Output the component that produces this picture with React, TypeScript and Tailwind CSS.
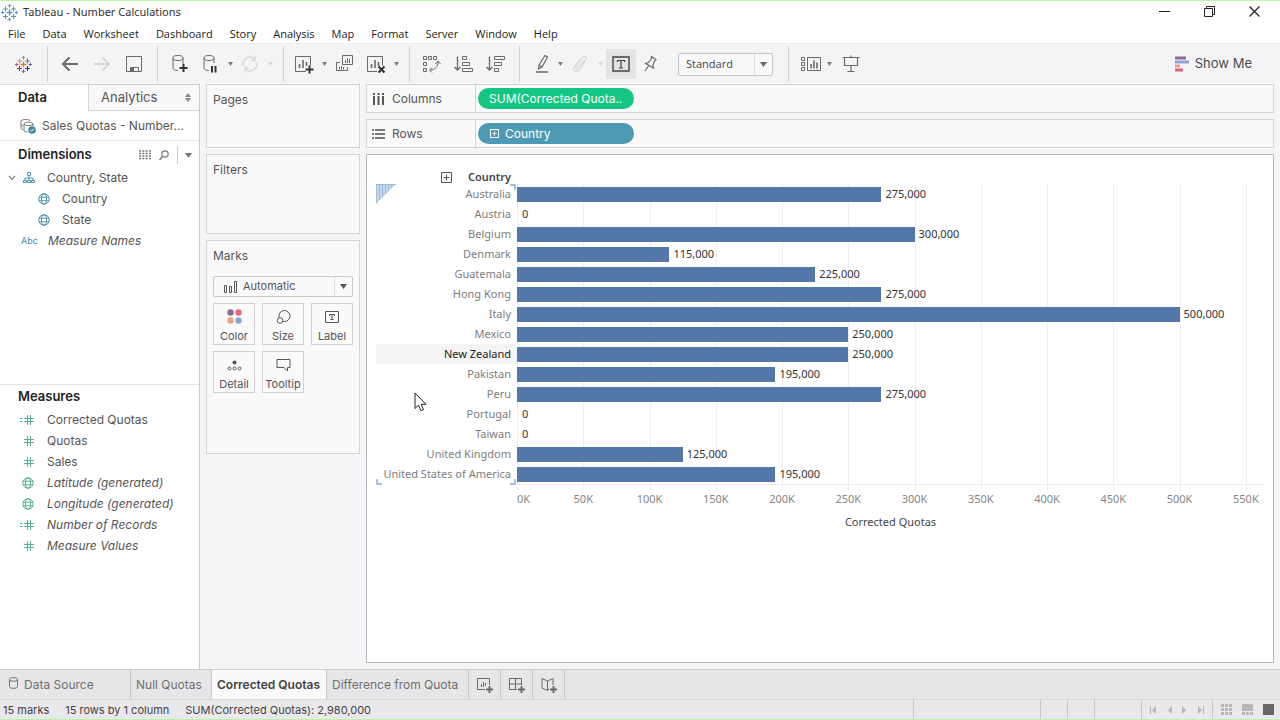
import { useState } from 'react';
import type { ReactNode } from 'react';

const menus = ['File', 'Data', 'Worksheet', 'Dashboard', 'Story', 'Analysis', 'Map', 'Format', 'Server', 'Window', 'Help'];

const quotas = [
    { country: 'Australia', value: 275000 },
    { country: 'Austria', value: 0 },
    { country: 'Belgium', value: 300000 },
    { country: 'Denmark', value: 115000 },
    { country: 'Guatemala', value: 225000 },
    { country: 'Hong Kong', value: 275000 },
    { country: 'Italy', value: 500000 },
    { country: 'Mexico', value: 250000 },
    { country: 'New Zealand', value: 250000 },
    { country: 'Pakistan', value: 195000 },
    { country: 'Peru', value: 275000 },
    { country: 'Portugal', value: 0 },
    { country: 'Taiwan', value: 0 },
    { country: 'United Kingdom', value: 125000 },
    { country: 'United States of America', value: 195000 },
];

const ticks = [0, 50, 100, 150, 200, 250, 300, 350, 400, 450, 500, 550];

// right edge of the axis
const AXIS_MAX = 563700;

const pct = (value: number) => `${(value / AXIS_MAX) * 100}%`;

type IconProps = { w?: number; h?: number; className?: string; children: ReactNode };

function Icon({ w = 20, h = 20, className = '', children }: IconProps) {
    return (
        <svg width={w} height={h} viewBox={`0 0 ${w} ${h}`} fill="none" stroke="currentColor" className={`shrink-0 ${className}`} aria-hidden="true">
            {children}
        </svg>
    );
}

function TableauLogo({ mono = false }: { mono?: boolean }) {
    const c = (color: string) => (mono ? '#5f95b5' : color);
    return (
        <Icon w={17} h={17}>
            <path d="M8.5 5.5v6M5.5 8.5h6" stroke={c('#e8762d')} strokeWidth="1.3" />
            <path d="M4.5 2.5v5M2 5h5" stroke={c('#eb9a57')} strokeWidth="1.1" />
            <path d="M12.5 2.5v5M10 5h5" stroke={c('#5b879b')} strokeWidth="1.1" />
            <path d="M4.5 10v5M2 12.5h5" stroke={c('#c72035')} strokeWidth="1.1" />
            <path d="M12.5 10v5M10 12.5h5" stroke={c('#1f447e')} strokeWidth="1.1" />
            <path d="M8.5 0v3.5M6.8 1.7h3.4" stroke={c('#7199a6')} />
            <path d="M8.5 13.5v3.5M6.8 15.3h3.4" stroke={c('#5c6692')} />
            <path d="M1.7 6.8v3.4M0 8.5h3.4" stroke={c('#a05a7c')} />
            <path d="M15.3 6.8v3.4M13.6 8.5h3.4" stroke={c('#5c6692')} />
        </Icon>
    );
}

function Caret({ faded = false }: { faded?: boolean }) {
    return (
        <button aria-label="More options" className={`flex h-7 w-3 items-center justify-center ${faded ? 'text-[#d8d8da]' : 'text-[#7c7c7c]'}`}>
            <Icon w={5} h={4}>
                <path d="M0 0h5L2.5 4z" fill="currentColor" stroke="none" />
            </Icon>
        </button>
    );
}

function Tool({ label, wide = false, faded = false, children }: { label: string; wide?: boolean; faded?: boolean; children: ReactNode }) {
    return (
        <button
            aria-label={label}
            className={`flex h-7 items-center justify-center ${wide ? 'w-8' : 'w-7'} ${faded ? 'text-[#d8d8da]' : 'text-[#6a6a6a]'}`}
        >
            {children}
        </button>
    );
}

function Group({ children }: { children: ReactNode }) {
    return <div className="flex h-9 items-center border-r border-[#cfcfd1] pl-1.5 pr-[7px]">{children}</div>;
}

function Toolbar() {
    return (
        <div className="flex h-[41px] shrink-0 items-center border-t border-[#ececee] text-[#5c5c5c]">
            <div className="flex h-9 w-12 items-center justify-center border-r border-[#cfcfd1]">
                <button aria-label="Start page"><TableauLogo /></button>
            </div>
            <Group>
                <Tool wide label="Undo">
                    <Icon w={18} h={16}><path d="M17 8H2M8.5 1.5L2 8l6.500 6.500" strokeWidth="2" /></Icon>
                </Tool>
                <Tool wide faded label="Redo">
                    <Icon w={18} h={16}><path d="M1 8h15M9.500 1.500L16 8l-6.500 6.500" strokeWidth="2" /></Icon>
                </Tool>
                <Tool wide label="Save">
                    <Icon w={16} h={18}>
                        <path d="M.5 1.500h15v15H.500zM4.500 16.500v-4h8v4" />
                        <path d="M5 13h3v3H5z" fill="currentColor" stroke="none" />
                    </Icon>
                </Tool>
            </Group>
            <Group>
                <Tool wide label="New data source">
                    <Icon>
                        <ellipse cx="8" cy="4" rx="5" ry="2.500" />
                        <path d="M3 4v10c0 1.500 2 2.500 5 2.500M13 4v6" />
                        <path d="M13.500 10v8M9.500 14h8" stroke="#333" strokeWidth="2" />
                    </Icon>
                </Tool>
                <Tool label="Pause auto updates">
                    <Icon>
                        <ellipse cx="9" cy="4" rx="5" ry="2.500" />
                        <path d="M4 4v10c0 1.500 2 2.500 5 2.500M14 4v5" />
                        <path d="M12 12v6.500M15.500 12v6.500" stroke="#333" strokeWidth="2" />
                    </Icon>
                </Tool>
                <Caret />
                <Tool faded label="Run update">
                    <Icon>
                        <path d="M3.500 12A7 7 0 0 1 15 5M16.500 8A7 7 0 0 1 5 15M15 1.500V6h-4M5 18.500V14h4" strokeWidth="1.300" />
                    </Icon>
                </Tool>
                <Caret faded />
            </Group>
            <Group>
                <Tool label="New worksheet">
                    <Icon>
                        <path d="M12 17.500H1.500v-15h15v9" />
                        <path d="M5.500 10v4M9 6v8M12.500 8v4" strokeWidth="1.600" />
                        <path d="M15.500 11.500v8M11.500 15.500h8" stroke="#333" strokeWidth="2" />
                    </Icon>
                </Tool>
                <Caret />
                <Tool label="Duplicate sheet">
                    <Icon>
                        <path d="M8.500 1.500h10v9h-10zM6 8.500H2.500v8h11V13" />
                        <path d="M11.500 6v3M13.500 4v5M15.500 5v4M5.500 13v2.500M7.500 12v3.500M9.500 13v2.500" />
                    </Icon>
                </Tool>
                <Tool wide label="Clear sheet">
                    <Icon className="ml-1">
                        <path d="M11 17.500H1.500v-15h15v9" />
                        <path d="M5.500 10v4M9 6v8M12.500 8v4" strokeWidth="1.600" />
                        <path d="M12.500 12.500l6 6M18.500 12.500l-6 6" stroke="#333" strokeWidth="2" />
                    </Icon>
                </Tool>
                <Caret />
            </Group>
            <Group>
                <Tool wide label="Swap rows and columns">
                    <Icon>
                        <path d="M1.500 2.500h3v3h-3zM6.500 2.500h3v3h-3zM11.500 2.500h3v3h-3zM1.500 8.500h3v3h-3zM1.500 14.500h3v3h-3z" />
                        <path d="M16 7.500c0 5-3 8.500-8 8.500M13.500 10L16 7l2.500 3M10 13.500L7.500 16l2.500 2.500" />
                    </Icon>
                </Tool>
                <Tool wide label="Sort ascending">
                    <Icon>
                        <path d="M3.500 2.500v13M.500 13l3 3 3-3" strokeWidth="1.300" />
                        <path d="M8.500 2.500h4v3h-4zM8.500 8.500h7v3h-7zM8.500 14.500h10v3h-10z" />
                    </Icon>
                </Tool>
                <Tool wide label="Sort descending">
                    <Icon>
                        <path d="M3.500 2.500v13M.500 13l3 3 3-3" strokeWidth="1.300" />
                        <path d="M8.500 2.500h10v3h-10zM8.500 8.500h7v3h-7zM8.500 14.500h4v3h-4z" />
                    </Icon>
                </Tool>
            </Group>
            <Group>
                <Tool label="Highlight">
                    <Icon className="ml-1">
                        <path d="M13 1.500l2.500 1.500-5.500 10-3.500 2 .500-4zM7 11l3 2" strokeWidth="1.200" />
                        <path d="M4 18h12" stroke="#8a8a8a" strokeWidth="2" />
                    </Icon>
                </Tool>
                <Caret />
                <Tool faded label="Group members">
                    <Icon>
                        <path d="M14 6l-6 8.500c-1 1.400-3 0-2-1.500l6.500-9.500c1.800-2.500 5.200-.200 3.500 2.300L9 16c-2.500 3.500-7 .500-4.800-2.800L9 6.500" strokeWidth="1.200" />
                    </Icon>
                </Tool>
                <Caret faded />
                <button aria-label="Show mark labels" className="flex h-[30px] w-[30px] items-center justify-center bg-[#e3e3e5] text-[#444]">
                    <Icon w={18} h={16}>
                        <path d="M1 1h16v14H1z" strokeWidth="1.400" />
                        <path d="M5.500 6V4.500h7V6M9 4.500v7.500M7 12h4" strokeWidth="1.200" />
                    </Icon>
                </button>
                <Tool label="Fix axes">
                    <Icon>
                        <path d="M11.500 2.500l4.500 3-1.500 1.500-1.500 4 .500 3-8-4.500 3-1 3-4zM8.500 12L5 17" strokeWidth="1.200" />
                    </Icon>
                </Tool>
                <div className="relative ml-3.5 mr-2 flex text-[#444]">
                    <select
                        aria-label="Fit"
                        className="h-[23px] w-[95px] appearance-none rounded-xs border border-[#c6c6c8] bg-[#f9f9fa] pl-[7px] font-['Open_Sans',sans-serif] text-[11px]"
                    >
                        <option>Standard</option>
                        <option>Fit Width</option>
                        <option>Entire View</option>
                    </select>
                    <span className="pointer-events-none absolute inset-y-px right-px flex w-[18px] items-center justify-center border-l border-[#dedee0] text-[#6a6a6a]">
                        <Icon w={7} h={5}><path d="M0 0h7L3.500 5z" fill="currentColor" stroke="none" /></Icon>
                    </span>
                </div>
            </Group>
            <div className="flex items-center pl-1.5">
                <Tool label="Show or hide cards">
                    <Icon className="ml-1">
                        <path d="M6.500 3.500h13v13h-13zM.500 3.500h3v3h-3zM.500 8.500h3v3h-3zM.500 13.500h3v3h-3z" />
                        <path d="M10 10v4.500M13 6.500v8M16 8.500v6" strokeWidth="1.600" />
                    </Icon>
                </Tool>
                <Caret />
                <Tool wide label="Presentation mode">
                    <Icon>
                        <path d="M1.500 3.500h17M3.500 3.500v8h13v-8M10 12v5M6.500 17.500h7M10 1.500v2" strokeWidth="1.200" />
                    </Icon>
                </Tool>
            </div>
            <button className="ml-auto mr-7 flex items-center gap-1.5 text-[13px] text-[#4a4a4a]">
                <Icon w={14} h={16}>
                    <path d="M0 2h11" stroke="#8b6c93" strokeWidth="3" />
                    <path d="M0 6h14" stroke="#8aa5cf" strokeWidth="3" />
                    <path d="M0 10h5" stroke="#eaa183" strokeWidth="3" />
                    <path d="M0 14h8" stroke="#e4607f" strokeWidth="3" />
                </Icon>
                Show Me
            </button>
        </div>
    );
}

function Globe() {
    return (
        <Icon w={12} h={12}>
            <circle cx="6" cy="6" r="5.200" />
            <ellipse cx="6" cy="6" rx="2.500" ry="5.200" />
            <path d="M1 4.200h10M1 7.800h10" />
        </Icon>
    );
}

function Hash({ calculated = false }: { calculated?: boolean }) {
    return (
        <Icon w={15} h={12}>
            <path d="M8.500 1v10M11.500 1v10M5 4.500h10M5 7.500h10" />
            {calculated && <path d="M1 4.500h2.500M1 7.500h2.500" />}
        </Icon>
    );
}

function HierarchyIcon() {
    return (
        <Icon w={12} h={13}>
            <path d="M4.500 1.500h3v3h-3zM.500 9.500h3v2h-3zM4.500 9.500h3v2h-3zM8.500 9.500h3v2h-3zM6 4.500v5M2 9V7h8v2" />
        </Icon>
    );
}

const measures = [
    { name: 'Corrected Quotas', icon: <Hash calculated /> },
    { name: 'Quotas', icon: <Hash /> },
    { name: 'Sales', icon: <Hash /> },
    { name: 'Latitude (generated)', icon: <Globe />, generated: true },
    { name: 'Longitude (generated)', icon: <Globe />, generated: true },
    { name: 'Number of Records', icon: <Hash calculated />, generated: true },
    { name: 'Measure Values', icon: <Hash />, generated: true },
];

function DataPane() {
    return (
        <aside className="flex w-[200px] shrink-0 flex-col border-r border-[#cdcdcf] bg-white text-[12px] text-[#555]">
            <div className="flex h-[27px] shrink-0 text-[13px]">
                <button className="w-[88px] border-t border-[#dcdcde] pl-[18px] text-left font-semibold text-[#222]">Data</button>
                <button className="flex flex-1 items-center justify-between border-b border-l border-t border-[#d4d4d6] bg-[#f8f8f9] pl-3 pr-2">
                    Analytics
                    <Icon w={6} h={9}><path d="M0 4l3-4 3 4zM0 5h6L3 9z" fill="#888" stroke="none" /></Icon>
                </button>
            </div>
            <button className="flex h-[30px] shrink-0 items-center gap-1.5 border-b border-[#e4e4e6] pl-5 text-left">
                <Icon w={16} h={16} className="text-[#777]">
                    <path d="M1 3c0-1.500 9-2.500 9 0M1 3v7c0 1 1 1.500 2.500 1.500M1 6.500c0 1 1 1.500 2 1.500M4 6c0-2.500 9-2.500 9 0v2M4 6v6.500c0 1 1.500 1.500 3.500 1.500M4 6c0 2 9 2 9 0" />
                    <circle cx="12" cy="12" r="3.800" fill="#3d87a6" stroke="none" />
                    <path d="M10.200 12l1.300 1.300 2.300-2.600" stroke="#fff" />
                </Icon>
                Sales Quotas - Number...
            </button>
            <section className="h-[244px] shrink-0 border-b border-[#e4e4e6]">
                <div className="flex h-[26px] items-center pl-[18px] pt-0.5 text-[#777]">
                    <h2 className="flex-1 text-[13px] font-semibold text-[#222]">Dimensions</h2>
                    <button aria-label="View data" className="mr-2">
                        <Icon w={12} h={10}><path d="M0 1h12M0 3.500h12M0 6h12M0 8.500h12" strokeDasharray="2 1.300" strokeWidth="1.300" /></Icon>
                    </button>
                    <button aria-label="Find field" className="mr-2">
                        <Icon w={10} h={11}><circle cx="6" cy="4" r="3.200" strokeWidth="1.200" /><path d="M3.500 6.500L.500 10" strokeWidth="1.500" /></Icon>
                    </button>
                    <button aria-label="Dimensions menu" className="flex h-[18px] w-[22px] items-center justify-center border-l border-[#cfcfd1]">
                        <Icon w={7} h={5}><path d="M0 0h7L3.500 5z" fill="currentColor" stroke="none" /></Icon>
                    </button>
                </div>
                <ul>
                    <li className="flex h-[21px] items-center pl-2">
                        <Icon w={8} h={6} className="text-[#888]"><path d="M1 1l3 3.500L7 1" strokeWidth="1.400" /></Icon>
                        <span className="flex w-[31px] pl-[7px] text-[#4f93ae]"><HierarchyIcon /></span>
                        Country, State
                    </li>
                    <li className="flex h-[21px] items-center pl-[38px]">
                        <span className="w-6 text-[#4f93ae]"><Globe /></span>
                        Country
                    </li>
                    <li className="flex h-[21px] items-center pl-[38px]">
                        <span className="w-6 text-[#4f93ae]"><Globe /></span>
                        State
                    </li>
                    <li className="flex h-[21px] items-center pl-[21px] italic">
                        <span className="w-[27px] text-[9px] not-italic text-[#3d87a6]">Abc</span>
                        Measure Names
                    </li>
                </ul>
            </section>
            <section>
                <h2 className="flex h-6 items-center pl-[18px] text-[13px] font-semibold text-[#222]">Measures</h2>
                <ul>
                    {measures.map((m) => (
                        <li key={m.name} className={`flex h-[21px] items-center ${m.generated ? 'italic' : ''}`}>
                            <span className="flex w-[34px] justify-end text-[#55b08c]">{m.icon}</span>
                            <span className="pl-[13px]">{m.name}</span>
                        </li>
                    ))}
                </ul>
            </section>
        </aside>
    );
}

function MarkButton({ label, children }: { label: string; children: ReactNode }) {
    return (
        <button className="flex h-[42px] flex-col items-center justify-between border border-[#d0d0d2] bg-[#fafafa] pt-[5px] text-[11px]">
            {children}
            {label}
        </button>
    );
}

function Cards() {
    return (
        <div className="flex w-[154px] shrink-0 flex-col gap-1.5 text-[12px] text-[#555]">
            <section className="h-16 border border-[#d4d4d6] bg-[#f9f9fa] px-1.5 pt-1.5">
                <h2>Pages</h2>
            </section>
            <section className="h-20 border border-[#d4d4d6] bg-[#f9f9fa] px-1.5 pt-1.5">
                <h2>Filters</h2>
            </section>
            <section className="h-[214px] border border-[#d4d4d6] bg-[#f9f9fa] px-1.5 pt-1.5">
                <h2>Marks</h2>
                <div className="relative mt-[11px]">
                    <select aria-label="Mark type" className="h-[21px] w-full appearance-none rounded-xs border border-[#c8c8ca] bg-[#fafafa] pl-[29px] text-[11px]">
                        <option>Automatic</option>
                        <option>Bar</option>
                        <option>Line</option>
                    </select>
                    <span className="pointer-events-none absolute inset-y-0 left-[11px] flex items-center">
                        <Icon w={14} h={12}><path d="M.500 4.500h2v7h-2zM5.500 5.500h2v6h-2zM10.500.500h2v11h-2z" /></Icon>
                    </span>
                    <span className="pointer-events-none absolute inset-y-px right-px flex w-[18px] items-center justify-center border-l border-[#dedee0]">
                        <Icon w={7} h={5}><path d="M0 0h7L3.500 5z" fill="currentColor" stroke="none" /></Icon>
                    </span>
                </div>
                <div className="mt-1.5 grid grid-cols-3 gap-x-[7px] gap-y-1.5">
                    <MarkButton label="Color">
                        <Icon w={15} h={15}>
                            <g stroke="none">
                                <circle cx="3.500" cy="3.500" r="3.200" fill="#8b6c93" />
                                <circle cx="11.500" cy="3.500" r="3.200" fill="#ea6583" />
                                <circle cx="3.500" cy="11.500" r="3.200" fill="#e8a183" />
                                <circle cx="11.500" cy="11.500" r="3.200" fill="#86a6cb" />
                            </g>
                        </Icon>
                    </MarkButton>
                    <MarkButton label="Size">
                        <Icon w={15} h={15}>
                            <circle cx="8.500" cy="7" r="5.500" />
                            <circle cx="4" cy="11.500" r="2.800" fill="#fafafa" />
                        </Icon>
                    </MarkButton>
                    <MarkButton label="Label">
                        <Icon w={14} h={15}>
                            <path d="M.500 2.500h13v11H.500z" />
                            <path d="M4.500 7V5.500h5V7M7 5.500v5M5.500 10.500h3" />
                        </Icon>
                    </MarkButton>
                    <MarkButton label="Detail">
                        <Icon w={15} h={15}>
                            <circle cx="7.500" cy="5.500" r="2" fill="currentColor" stroke="none" />
                            <circle cx="2.500" cy="11.500" r="1.500" />
                            <circle cx="7.500" cy="11.500" r="1.500" />
                            <circle cx="12.500" cy="11.500" r="1.500" />
                        </Icon>
                    </MarkButton>
                    <MarkButton label="Tooltip">
                        <Icon w={15} h={15}><path d="M1 2.500h13v8h-2.500V14L8 10.500H1z" /></Icon>
                    </MarkButton>
                </div>
            </section>
        </div>
    );
}

function Shelf({ label, icon, children }: { label: string; icon: ReactNode; children: ReactNode }) {
    return (
        <div className="flex h-[29px] shrink-0 border border-[#d4d4d6] bg-[#f9f9fa]">
            <div className="flex w-[109px] items-center gap-[7px] border-r border-[#d4d4d6] pl-[5px] text-[12px] text-[#555]">
                {icon}
                {label}
            </div>
            <div className="flex items-center pl-0.5">{children}</div>
        </div>
    );
}

function PlusBox({ size }: { size: 9 | 11 }) {
    const mid = size / 2;
    return (
        <Icon w={size} h={size}>
            <path d={`M.500.500h${size - 1}v${size - 1}H.500zM${mid} 2.500v${size - 5}M2.500 ${mid}h${size - 5}`} />
        </Icon>
    );
}

function Chart() {
    return (
        <figure className="min-h-0 flex-1 border border-[#b9b9bd] bg-white pl-[9px] pr-[9px] pt-3.5 font-['Noto_Sans',sans-serif] text-[11px]">
            <div className="flex h-[15px] w-[135px] items-center justify-end gap-4 pt-0.5 text-[#555]">
                <button aria-label="Expand Country"><PlusBox size={11} /></button>
                <span className="font-semibold text-[#444]">Country</span>
            </div>
            <div className="flex">
                <div className="relative w-[141px] shrink-0">
                    {quotas.map((q) => (
                        <div
                            key={q.country}
                            className={`flex h-5 items-center justify-end whitespace-nowrap pr-1.5 ${q.country === 'New Zealand' ? 'bg-[#f4f4f5] text-[#222]' : 'text-[#7d7d7d]'}`}
                        >
                            {q.country}
                        </div>
                    ))}
                    {/* selection handles around the header column */}
                    <svg width="20" height="20" className="absolute left-0 top-0" aria-hidden="true">
                        <path d="M0 0h20L0 20z" fill="#c3d8ea" />
                        <path d="M0 .500h20M.500 0v19M3.500 0v16M6.500 0v13M9.500 0v10M12.500 0v7M15.500 0v4" stroke="#9cbcd6" />
                    </svg>
                    <span className="absolute right-px top-0 size-1.5 border-r-2 border-t-2 border-[#a5c0d8]" />
                    <span className="absolute bottom-0 left-0 size-1.5 border-b-2 border-l-2 border-[#a5c0d8]" />
                    <span className="absolute bottom-0 right-px size-1.5 border-b-2 border-r-2 border-[#a5c0d8]" />
                    <svg width="13" height="20" viewBox="0 0 13 20" className="absolute left-[38px] top-[208px] z-10" aria-hidden="true">
                        <path d="M1 1v15.500l3.500-3.300L7 18.800l2.500-1.200L7.200 12.300H12z" fill="#fff" stroke="#222" />
                    </svg>
                </div>
                <div className="relative flex-1 border-b border-[#ececef]">
                    {ticks.map((t) => (
                        <span key={t} className="absolute -bottom-1.5 top-0 w-px bg-[#efeff2]" style={{ left: pct(t * 1000) }} />
                    ))}
                    {quotas.map((q) => (
                        <div key={q.country} className="relative flex h-5 items-center">
                            <div className="h-[15px] bg-[#5277a8]" style={{ width: pct(q.value) }} />
                            <span className={`text-[#333] ${q.value === 0 ? 'pl-[5px]' : 'pl-1'}`}>{q.value.toLocaleString('en-US')}</span>
                        </div>
                    ))}
                </div>
            </div>
            <div className="relative ml-[141px] mt-1.5 h-[18px] text-[#868686]">
                {ticks.map((t) => (
                    <span key={t} className={`absolute top-0 ${t === 0 ? '' : '-translate-x-1/2'}`} style={{ left: pct(t * 1000) }}>
                        {t}K
                    </span>
                ))}
            </div>
            <figcaption className="ml-[141px] mt-[5px] text-center text-[#444]">Corrected Quotas</figcaption>
        </figure>
    );
}

function NewTabButton({ label, children }: { label: string; children: ReactNode }) {
    return (
        <button aria-label={label} className="flex w-8 items-center justify-center border-r border-[#c6c6c8] text-[#6a6a6a]">
            <Icon w={16} h={16}>
                {children}
                <path d="M12.500 9v7M9 12.500h7" strokeWidth="1.800" />
            </Icon>
        </button>
    );
}

function SheetTabs() {
    const [active, setActive] = useState('Corrected Quotas');
    const sheets = [
        { name: 'Null Quotas', width: 'w-[81px]' },
        { name: 'Corrected Quotas', width: 'w-[115px]' },
        { name: 'Difference from Quota', width: 'w-[142px]' },
    ];

    return (
        <nav className="flex h-[30px] shrink-0 border-t border-[#cfcfd1] bg-[#e6e6e8] text-[12px] text-[#707070]">
            <button className="flex w-[131px] items-center gap-1.5 border-r border-[#c6c6c8] pl-[9px]">
                <Icon w={9} h={12} className="mb-1">
                    <path d="M.500 2.500v7c0 2.500 8 2.500 8 0v-7M.500 2.500c0-2.500 8-2.500 8 0s-8 2-8 0z" />
                </Icon>
                Data Source
            </button>
            {sheets.map((s) => (
                <button
                    key={s.name}
                    onClick={() => setActive(s.name)}
                    className={`whitespace-nowrap border-r border-[#c6c6c8] pl-[5px] text-left ${s.width} ${active === s.name ? 'bg-[#fafafb] font-semibold text-[#444]' : ''}`}
                >
                    {s.name}
                </button>
            ))}
            <NewTabButton label="New Worksheet">
                <path d="M8 12.500H.500v-11h12V8M4.500 7v3M6.500 5v5M8.500 6v3" />
            </NewTabButton>
            <NewTabButton label="New Dashboard">
                <path d="M8 12.500H.500v-11h12V8M6.500 1.500v11M.500 7h12" />
            </NewTabButton>
            <NewTabButton label="New Story">
                <path d="M8 12L6.500 13.500 1 11V1.500l5.500 2.500L12 1.500V8M6.500 4v9" />
            </NewTabButton>
        </nav>
    );
}

function StatusBar() {
    return (
        <footer className="flex h-[21px] shrink-0 items-center border-b border-t border-b-[#b9f5a9] border-t-[#d8d8da] bg-[#e9e8ea] text-[11px] text-[#444]">
            <div className="flex gap-4 pl-[3px] pt-px">
                <span>15 marks</span>
                <span>15 rows by 1 column</span>
                <span>SUM(Corrected Quotas): 2,980,000</span>
            </div>
            <div className="ml-auto flex h-full">
                <span className="w-[127px] border-l border-[#c8c8ca]" />
                <span className="w-[27px] border-l border-[#c8c8ca]" />
                <span className="w-[27px] border-l border-[#c8c8ca]" />
                <span className="w-[47px] border-l border-[#c8c8ca]" />
                <div className="flex w-[71px] items-center justify-between border-l border-[#c8c8ca] px-2 text-[#b4b4b6]">
                    <button aria-label="First sheet"><Icon w={7} h={8}><path d="M.500 0v8" /><path d="M6 0v8L2 4z" fill="currentColor" stroke="none" /></Icon></button>
                    <button aria-label="Previous sheet"><Icon w={7} h={8}><path d="M6 0v8L2 4z" fill="currentColor" stroke="none" /></Icon></button>
                    <button aria-label="Next sheet"><Icon w={7} h={8}><path d="M1 0v8l4-4z" fill="currentColor" stroke="none" /></Icon></button>
                    <button aria-label="Last sheet"><Icon w={7} h={8}><path d="M6.500 0v8" /><path d="M1 0v8l4-4z" fill="currentColor" stroke="none" /></Icon></button>
                </div>
                <div className="flex items-center gap-2.5 border-l border-[#c8c8ca] pl-2 pr-1.5 text-[#b8b8ba]">
                    <button aria-label="Show sheet sorter">
                        <Icon w={11} h={11}><path d="M0 1.500h11M0 5.500h11M0 9.500h11" strokeDasharray="3 1" strokeWidth="3" /></Icon>
                    </button>
                    <button aria-label="Show filmstrip">
                        <Icon w={11} h={11}><path d="M0 3.500h11" strokeWidth="7" /><path d="M0 9.500h11" strokeDasharray="3 1" strokeWidth="3" /></Icon>
                    </button>
                    <button aria-label="Show tabs" className="size-[11px] bg-[#666668]" />
                </div>
            </div>
        </footer>
    );
}

export default function App() {
    return (
        <div className="flex h-screen min-h-[600px] flex-col border-t border-[#b9f5a9] bg-[#f4f4f6] font-['Inter',sans-serif]">
            <header className="shrink-0 bg-white text-[11px] text-[#1c1c1c]">
                <div className="flex h-[22px] items-center pl-[1px]">
                    <TableauLogo mono />
                    <h1 className="flex-1 pl-[5px] font-['Noto_Sans',sans-serif] text-[#333]">Tableau - Number Calculations</h1>
                    <div className="flex h-full pb-0.5 text-[#222]">
                        <button aria-label="Minimize" className="flex w-[45px] items-center justify-center"><Icon w={11} h={11}><path d="M0 5.500h11" /></Icon></button>
                        <button aria-label="Restore" className="flex w-[45px] items-center justify-center">
                            <Icon w={11} h={11}><path d="M.500 2.500h8v8h-8zM2.500 2.500v-2h8v8h-2" /></Icon>
                        </button>
                        <button aria-label="Close" className="mr-[3px] flex w-[45px] items-center justify-center"><Icon w={11} h={11}><path d="M.500.500l10 10M10.500.500l-10 10" strokeWidth="1.200" /></Icon></button>
                    </div>
                </div>
                <nav className="flex h-5 items-center gap-[17px] pl-2 pt-0.5 font-['Open_Sans',sans-serif]">
                    {menus.map((m) => (
                        <button key={m}>{m}</button>
                    ))}
                </nav>
            </header>
            <Toolbar />
            <main className="flex min-h-0 flex-1">
                <DataPane />
                <div className="flex min-w-0 flex-1 gap-1.5 px-1.5 pb-1.5">
                    <Cards />
                    <div className="flex min-w-0 flex-1 flex-col gap-1.5">
                        <Shelf
                            label="Columns"
                            icon={<Icon w={13} h={12}><path d="M2 3v9M6.500 3v9M11 3v9" strokeWidth="2" /><path d="M2 0v2M6.500 0v2M11 0v2" strokeWidth="2" /></Icon>}
                        >
                            <button className="h-[21px] w-[156px] rounded-full bg-[#14c684] pl-[11px] text-left text-[12px] text-white">SUM(Corrected Quota..</button>
                        </Shelf>
                        <Shelf
                            label="Rows"
                            icon={<Icon w={13} h={12} className="text-[#777]"><path d="M3 2h10M3 6h10M3 10h10" strokeWidth="2" /><path d="M0 2h2M0 6h2M0 10h2" strokeWidth="2" /></Icon>}
                        >
                            <button className="flex h-[21px] w-[156px] items-center gap-1.5 rounded-full bg-[#4e9ab4] pl-3 text-left text-[12px] text-white">
                                <PlusBox size={9} />
                                Country
                            </button>
                        </Shelf>
                        <Chart />
                    </div>
                </div>
            </main>
            <SheetTabs />
            <StatusBar />
        </div>
    );
}
